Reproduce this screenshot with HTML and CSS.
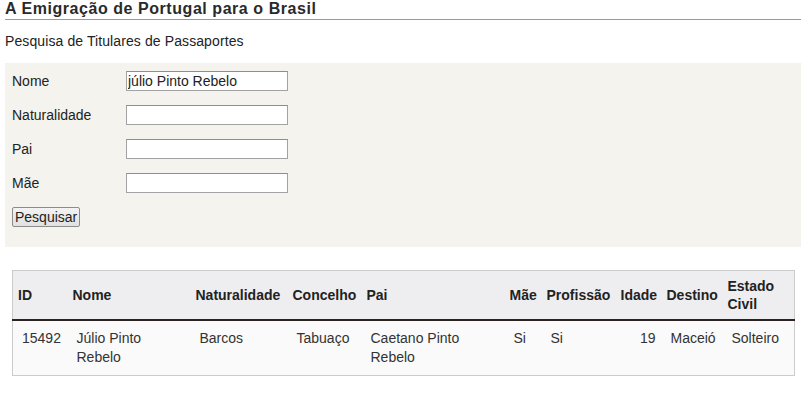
FILE: index.html
```html
<!DOCTYPE html>
<html lang="pt">
<head>
<meta charset="utf-8">
<title>A Emigração de Portugal para o Brasil</title>
<link rel="stylesheet" href="styles.css">
</head>
<body>
<div class="page">
  <h1 class="title">A Emigração de Portugal para o Brasil</h1>
  <p class="subtitle">Pesquisa de Titulares de Passaportes</p>
  <form class="panel">
    <label class="lbl" for="f-nome">Nome</label>
    <input class="field" id="f-nome" type="text" value="júlio Pinto Rebelo">
    <label class="lbl" for="f-nat">Naturalidade</label>
    <input class="field" id="f-nat" type="text">
    <label class="lbl" for="f-pai">Pai</label>
    <input class="field" id="f-pai" type="text">
    <label class="lbl" for="f-mae">Mãe</label>
    <input class="field" id="f-mae" type="text">
    <div class="actions"><button class="btn" type="button">Pesquisar</button></div>
  </form>
  <div class="results">
    <table class="grid">
      <thead>
        <tr>
          <th class="c-id">ID</th>
          <th class="c-nome">Nome</th>
          <th class="c-nat">Naturalidade</th>
          <th class="c-con">Concelho</th>
          <th class="c-pai">Pai</th>
          <th class="c-mae">Mãe</th>
          <th class="c-prof">Profissão</th>
          <th class="c-idade">Idade</th>
          <th class="c-dest">Destino</th>
          <th class="c-est">Estado Civil</th>
        </tr>
      </thead>
      <tbody>
        <tr>
          <td>15492</td>
          <td>Júlio Pinto Rebelo</td>
          <td>Barcos</td>
          <td>Tabuaço</td>
          <td>Caetano Pinto Rebelo</td>
          <td>Si</td>
          <td>Si</td>
          <td class="num">19</td>
          <td>Maceió</td>
          <td>Solteiro</td>
        </tr>
      </tbody>
    </table>
  </div>
</div>
</body>
</html>
```

FILE: styles.css
```css
html, body {
  margin: 0;
  padding: 0;
  background: #ffffff;
}
body {
  font-family: "Liberation Sans", Arial, sans-serif;
  font-size: 14px;
  color: #222222;
}
.page {
  margin: 0 8px 0 5px;
}
.title {
  margin: 0;
  font-size: 16px;
  line-height: 18px;
  letter-spacing: 0.55px;
  font-weight: bold;
  color: #2a2a2a;
  padding-bottom: 1px;
  border-bottom: 1px solid #9a9a9a;
}
.subtitle {
  margin: 13px 0 0 0;
  line-height: 16px;
  letter-spacing: 0.1px;
}
.panel {
  margin-top: 14px;
  background: #f4f3ee;
  padding: 8px 7px 20px 7px;
  display: grid;
  grid-template-columns: 114px 162px;
  row-gap: 14px;
  align-items: center;
}
.lbl {
  line-height: 16px;
}
.field {
  box-sizing: border-box;
  width: 162px;
  height: 20px;
  margin: 0;
  padding: 0 1px;
  border: 1px solid #a2a2a2;
  border-top-color: #8e8e8e;
  background: #ffffff;
  font-family: "Liberation Sans", Arial, sans-serif;
  font-size: 14px;
  color: #222222;
  outline: none;
}
.actions {
  grid-column: 1 / 3;
}
.btn {
  box-sizing: border-box;
  height: 20px;
  margin: 0;
  padding: 0 2px;
  border: 1px solid #8c8c8c;
  border-radius: 2px;
  background: linear-gradient(#f3f3f3, #e1e1e1);
  font-family: "Liberation Sans", Arial, sans-serif;
  font-size: 14px;
  color: #222222;
  line-height: 16px;
}
.results {
  margin-top: 23px;
  padding: 0 6px 0 7px;
}
.grid {
  width: 100%;
  border-collapse: collapse;
  border: 1px solid #cccccc;
  table-layout: fixed;
}
.grid th,
.grid td {
  box-sizing: border-box;
}
.grid th {
  background: #eeeef0;
  font-weight: bold;
  text-align: left;
  vertical-align: middle;
  padding: 6px 2px 6px 5px;
  line-height: 18px;
  white-space: nowrap;
  border-bottom: 2px solid #2b2222;
  color: #222222;
}
.grid th.c-est {
  white-space: normal;
}
.grid td {
  background: #fafafa;
  vertical-align: top;
  padding: 8px 6px 8px 9px;
  line-height: 19px;
  color: #333333;
}
.grid td.num {
  text-align: right;
}
.c-id { width: 55px; }
.c-nome { width: 123px; }
.c-nat { width: 97px; }
.c-con { width: 74px; }
.c-pai { width: 143px; }
.c-mae { width: 37px; }
.c-prof { width: 74px; }
.c-idade { width: 46px; }
.c-dest { width: 61px; }
.c-est { width: auto; }
```
